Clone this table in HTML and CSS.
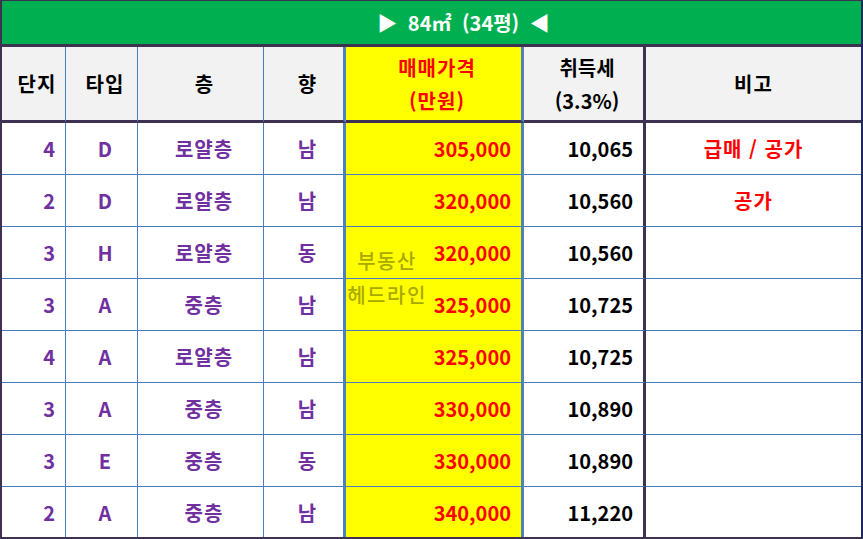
FILE: index.html
```html
<!DOCTYPE html>
<html lang="ko">
<head>
<meta charset="utf-8">
<title>84㎡ (34평)</title>
<link rel="stylesheet" href="styles.css">
</head>
<body>
<div class="sheet">
  <div class="title">▶ 84㎡ (34평) ◀</div>

  <div class="cell head c1 sh ko">단지</div>
  <div class="cell head c2 sh ko">타입</div>
  <div class="cell head c3 sh">층</div>
  <div class="cell head c4 sh">향</div>
  <div class="cell head c5 sh red ko">매매가격<br>(만원)</div>
  <div class="cell head c6 sh">취득세<br>(3.3%)</div>
  <div class="cell head c7 ko">비고</div>

  <div class="cell c1 num purple">4</div><div class="cell c2 sh purple">D</div><div class="cell c3 sh purple ko">로얄층</div><div class="cell c4 sh purple">남</div><div class="cell c5 num red">305,000</div><div class="cell c6 num">10,065</div><div class="cell c7 red ko">급매 / 공가</div>
  <div class="cell c1 num purple">2</div><div class="cell c2 sh purple">D</div><div class="cell c3 sh purple ko">로얄층</div><div class="cell c4 sh purple">남</div><div class="cell c5 num red">320,000</div><div class="cell c6 num">10,560</div><div class="cell c7 red ko">공가</div>
  <div class="cell c1 num purple">3</div><div class="cell c2 sh purple">H</div><div class="cell c3 sh purple ko">로얄층</div><div class="cell c4 sh purple">동</div><div class="cell c5 num red">320,000</div><div class="cell c6 num">10,560</div><div class="cell c7"></div>
  <div class="cell c1 num purple">3</div><div class="cell c2 sh purple">A</div><div class="cell c3 sh purple ko">중층</div><div class="cell c4 sh purple">남</div><div class="cell c5 num red">325,000</div><div class="cell c6 num">10,725</div><div class="cell c7"></div>
  <div class="cell c1 num purple">4</div><div class="cell c2 sh purple">A</div><div class="cell c3 sh purple ko">로얄층</div><div class="cell c4 sh purple">남</div><div class="cell c5 num red">325,000</div><div class="cell c6 num">10,725</div><div class="cell c7"></div>
  <div class="cell c1 num purple">3</div><div class="cell c2 sh purple">A</div><div class="cell c3 sh purple ko">중층</div><div class="cell c4 sh purple">남</div><div class="cell c5 num red">330,000</div><div class="cell c6 num">10,890</div><div class="cell c7"></div>
  <div class="cell c1 num purple">3</div><div class="cell c2 sh purple">E</div><div class="cell c3 sh purple ko">중층</div><div class="cell c4 sh purple">동</div><div class="cell c5 num red">330,000</div><div class="cell c6 num">10,890</div><div class="cell c7"></div>
  <div class="cell c1 num purple last">2</div><div class="cell c2 sh purple last">A</div><div class="cell c3 sh purple last ko">중층</div><div class="cell c4 sh purple last">남</div><div class="cell c5 num red last">340,000</div><div class="cell c6 num last">11,220</div><div class="cell c7 last"></div>

  <div class="watermark">부동산<br>헤드라인</div>
</div>
</body>
</html>
```

FILE: styles.css
```css
html, body {
  margin: 0;
  padding: 0;
  background: #ffffff;
}

.sheet {
  position: relative;
  width: 863px;
  height: 539px;
  box-sizing: border-box;
  border-top: 1px solid #3f3151;
  border-left: 2px solid #3f3151;
  border-right: 2px solid #1f2a5c;
  border-bottom: 2px solid #3f3151;
  display: grid;
  grid-template-columns: 64px 72px 126px 82px 178px 122px 215px;
  grid-template-rows: 46px 76px repeat(7, 52px) 50px;
  font-family: "Noto Sans CJK KR", "Noto Sans", sans-serif;
  font-weight: 700;
  font-size: 20px;
  color: #000000;
}

.title {
  grid-column: 1 / -1;
  background: #00b050;
  color: #ffffff;
  border-bottom: 3px solid #3f3151;
  display: flex;
  align-items: center;
  justify-content: center;
  font-size: 20px;
  word-spacing: 5px;
  padding-left: 64px;
}

.cell {
  display: flex;
  align-items: center;
  justify-content: center;
  text-align: center;
  border-bottom: 1px solid #4a7ebb;
  line-height: 33px;
  white-space: nowrap;
  overflow: hidden;
}

.cell.last {
  border-bottom: none;
}

.head {
  background: #f2f2f2;
  border-bottom: 3px solid #3f3151;
}

.c1, .c2, .c3 {
  border-right: 1px solid #4a7ebb;
}

.c4 {
  border-right: 3px solid #4f81bd;
}

.c5 {
  background: #ffff00;
  border-right: 3px solid #4f81bd;
}

.c5.head {
  background: #ffff00;
}

.c6 {
  border-right: 3px solid #3f3151;
}

.sh {
  padding-left: 7px;
}

.ko {
  letter-spacing: 1px;
}

.num {
  justify-content: flex-end;
  padding-right: 10px;
}

.purple {
  color: #7030a0;
}

.red {
  color: #ff0000;
}

.watermark {
  position: absolute;
  left: 342px;
  top: 243px;
  width: 86px;
  text-align: center;
  line-height: 34px;
  font-size: 20px;
  font-weight: 500;
  letter-spacing: 1.5px;
  color: #a9a900;
  pointer-events: none;
}
```
